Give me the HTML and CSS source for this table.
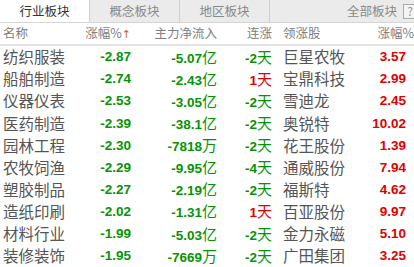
FILE: index.html
```html
<!DOCTYPE html>
<html lang="zh">
<head>
<meta charset="utf-8">
<link rel="stylesheet" href="styles.css">
</head>
<body>
<div class="panel">
  <div class="tabs">
    <div class="tab active">行业板块</div>
    <div class="tab">概念板块</div>
    <div class="tab">地区板块</div>
    <div class="tab-fill"><span class="all">全部板块</span><span class="help">?</span></div>
  </div>
  <div class="row head">
    <span class="c-name">名称</span>
    <span class="c-chg">涨幅%<span class="arrow">↑</span></span>
    <span class="c-flow">主力净流入</span>
    <span class="c-days">连涨</span>
    <span class="c-lead">领涨股</span>
    <span class="c-lchg">涨幅%</span>
  </div>
  <div class="row"><span class="c-name">纺织服装</span><span class="c-chg g">-2.87</span><span class="c-flow g">-5.07<i>亿</i></span><span class="c-days g">-2<i>天</i></span><span class="c-lead">巨星农牧</span><span class="c-lchg r">3.57</span></div>
  <div class="row"><span class="c-name">船舶制造</span><span class="c-chg g">-2.74</span><span class="c-flow g">-2.43<i>亿</i></span><span class="c-days r">1<i>天</i></span><span class="c-lead">宝鼎科技</span><span class="c-lchg r">2.99</span></div>
  <div class="row"><span class="c-name">仪器仪表</span><span class="c-chg g">-2.53</span><span class="c-flow g">-3.05<i>亿</i></span><span class="c-days g">-2<i>天</i></span><span class="c-lead">雪迪龙</span><span class="c-lchg r">2.45</span></div>
  <div class="row"><span class="c-name">医药制造</span><span class="c-chg g">-2.39</span><span class="c-flow g">-38.1<i>亿</i></span><span class="c-days g">-2<i>天</i></span><span class="c-lead">奥锐特</span><span class="c-lchg r">10.02</span></div>
  <div class="row"><span class="c-name">园林工程</span><span class="c-chg g">-2.30</span><span class="c-flow g">-7818<i>万</i></span><span class="c-days g">-2<i>天</i></span><span class="c-lead">花王股份</span><span class="c-lchg r">1.39</span></div>
  <div class="row"><span class="c-name">农牧饲渔</span><span class="c-chg g">-2.29</span><span class="c-flow g">-9.95<i>亿</i></span><span class="c-days g">-4<i>天</i></span><span class="c-lead">通威股份</span><span class="c-lchg r">7.94</span></div>
  <div class="row"><span class="c-name">塑胶制品</span><span class="c-chg g">-2.27</span><span class="c-flow g">-2.19<i>亿</i></span><span class="c-days g">-2<i>天</i></span><span class="c-lead">福斯特</span><span class="c-lchg r">4.62</span></div>
  <div class="row"><span class="c-name">造纸印刷</span><span class="c-chg g">-2.02</span><span class="c-flow g">-1.31<i>亿</i></span><span class="c-days r">1<i>天</i></span><span class="c-lead">百亚股份</span><span class="c-lchg r">9.97</span></div>
  <div class="row"><span class="c-name">材料行业</span><span class="c-chg g">-1.99</span><span class="c-flow g">-5.03<i>亿</i></span><span class="c-days g">-2<i>天</i></span><span class="c-lead">金力永磁</span><span class="c-lchg r">5.10</span></div>
  <div class="row"><span class="c-name">装修装饰</span><span class="c-chg g">-1.95</span><span class="c-flow g">-7669<i>万</i></span><span class="c-days g">-2<i>天</i></span><span class="c-lead">广田集团</span><span class="c-lchg r">3.25</span></div>
</div>
</body>
</html>
```
FILE: styles.css
```css
* { box-sizing: border-box; }
html, body { margin: 0; padding: 0; background: #fff; }
body { font-family: "Noto Sans CJK SC", "DejaVu Sans", sans-serif; overflow: hidden; }
.panel { width: 414px; }
.tabs {
  display: flex;
  height: 23px;
  border-bottom: 1px solid #d4d4d4;
  background: #ebebeb;
}
.tab {
  width: 90px;
  display: flex;
  align-items: center;
  justify-content: center;
  font-size: 12.5px;
  color: #888;
  border-right: 1px solid #cfcfcf;
  line-height: 1;
}
.tab.active { background: #fff; color: #333; }
.tab-fill {
  flex: 1;
  display: flex;
  align-items: center;
  justify-content: flex-end;
  font-size: 12.5px;
  color: #888;
  line-height: 1;
}
.all { margin-right: 6px; }
.help {
  width: 13px;
  height: 15px;
  border: 1px solid #aaa;
  border-right: none;
  font-size: 12px;
  color: #999;
  display: flex;
  align-items: center;
  justify-content: center;
  margin-right: -2px;
  background: #f4f4f4;
}
.row {
  display: grid;
  grid-template-columns: 74px 57px 86px 55px 78px 64px;
  height: 22.1px;
  align-items: center;
  font-size: 15.5px;
  line-height: 1;
  white-space: nowrap;
}
.row.head {
  font-size: 12.5px;
  color: #808080;
  border-bottom: 2px solid #e4e4e4;
  height: 23px;
}
.c-name { padding-left: 3px; color: #555; }
.head .c-name { color: #808080; }
.c-chg, .c-flow, .c-days, .c-lchg { text-align: right; }
.c-lead { padding-left: 11px; color: #555; }
.head .c-lead { color: #808080; }
.c-lchg { padding-right: 8px; }
.head .c-lchg { padding-right: 0; }
.arrow { color: #e05a00; font-family: "DejaVu Sans", sans-serif; font-size: 11px; }
.g, .r {
  font-family: "Liberation Sans", Arial, sans-serif;
  font-weight: bold;
  font-size: 13.5px;
}
.g { color: #079307; }
.r { color: #e00000; }
.g i, .r i {
  font-style: normal;
  font-weight: normal;
  font-family: "Noto Sans CJK SC", sans-serif;
  font-size: 15px;
}
```
